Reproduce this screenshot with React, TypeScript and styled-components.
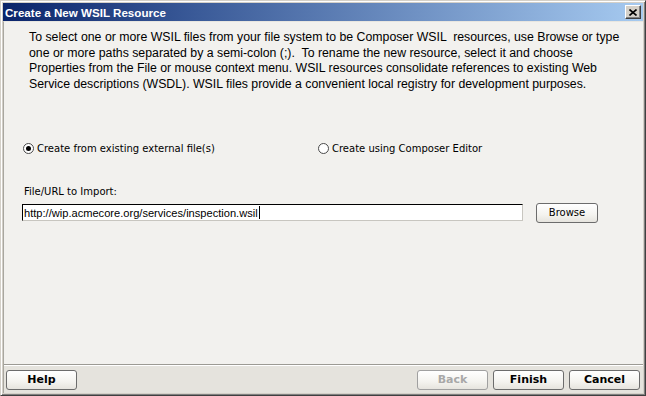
import React from "react";
import styled, { createGlobalStyle } from "styled-components";

const Global = createGlobalStyle`
  html, body { margin: 0; padding: 0; background: #d4d0c8; }
  * { box-sizing: border-box; }
`;

const Window = styled.div`
  width: 646px;
  height: 396px;
  display: flex;
  flex-direction: column;
  background: #d4d0c8;
  border: 1px solid;
  border-color: #d4d0c8 #404040 #404040 #d4d0c8;
  box-shadow: inset 1px 1px #ffffff, inset -1px -1px #808080;
  padding: 2px 2px 2px 2px;
`;

const TitleBar = styled.div`
  height: 18px;
  flex: none;
  display: flex;
  align-items: center;
  justify-content: space-between;
  padding: 0 2px 0 2px;
  background: linear-gradient(to right, #0a246a 0%, #3a5a98 30%, #a6caf0 100%);
`;

const Title = styled.span`
  color: #ffffff;
  font-family: "Liberation Sans", Arial, sans-serif;
  font-weight: bold;
  font-size: 11.6px;
`;

const CloseButton = styled.div`
  width: 16px;
  height: 14px;
  display: flex;
  align-items: center;
  justify-content: center;
  background: #d4d0c8;
  border: 1px solid;
  border-color: #ffffff #404040 #404040 #ffffff;
  box-shadow: inset -1px -1px #808080;
`;

const Body = styled.div`
  flex: 1;
  display: flex;
  flex-direction: column;
  background: #f2f1ee;
  border-top: 1px solid #e8e6e0;
  border-left: 1px solid #a8a69f;
`;

const Content = styled.div`
  flex: 1;
  padding: 8px 0 0 18px;
  display: flex;
  flex-direction: column;
`;

const Intro = styled.p`
  margin: 0 0 0 7px;
  font-family: "Liberation Sans", Arial, sans-serif;
  font-size: 12.3px;
  line-height: 15.7px;
  color: #000000;
`;

const Line = styled.span`
  display: block;
  white-space: pre;
`;

const RadioRow = styled.div`
  margin-top: 50px;
  display: grid;
  grid-template-columns: 295px 295px;
  align-items: center;
`;

const RadioOption = styled.label`
  display: flex;
  align-items: center;
  gap: 3px;
  font-family: "DejaVu Sans", sans-serif;
  font-size: 10px;
  color: #000000;
  padding-left: 1px;
`;

const RadioCircle = styled.span<{ $checked?: boolean }>`
  width: 11px;
  height: 11px;
  border-radius: 50%;
  border: 1px solid #4a4a4a;
  background: #ffffff;
  display: flex;
  align-items: center;
  justify-content: center;
  &::after {
    content: "";
    width: 5px;
    height: 5px;
    border-radius: 50%;
    background: ${(p) => (p.$checked ? "#000000" : "transparent")};
  }
`;

const FieldLabel = styled.div`
  margin-top: 32px;
  margin-left: 2px;
  font-family: "DejaVu Sans", sans-serif;
  font-size: 10px;
  color: #000000;
`;

const FieldRow = styled.div`
  margin-top: 6px;
  display: flex;
  align-items: center;
  gap: 13px;
`;

const TextBox = styled.div`
  width: 501px;
  height: 17px;
  background: #ffffff;
  border: 1px solid;
  border-color: #000000 #c8c6c0 #c8c6c0 #000000;
  display: flex;
  align-items: center;
  padding-left: 1px;
  font-family: "Liberation Sans", Arial, sans-serif;
  font-size: 11.1px;
  color: #000000;
`;

const Caret = styled.span`
  display: inline-block;
  width: 1px;
  height: 13px;
  background: #000000;
  margin-left: 1px;
`;

const Button = styled.button<{ $bold?: boolean; $w?: number }>`
  width: ${(p) => p.$w ?? 71}px;
  height: 20px;
  padding: 0;
  border: 1px solid #6c6c6c;
  border-radius: 3px;
  background: linear-gradient(to bottom, #ffffff 0%, #f4f3ef 60%, #e6e4de 100%);
  font-family: "DejaVu Sans", sans-serif;
  font-size: ${(p) => (p.$bold ? "11px" : "10px")};
  font-weight: ${(p) => (p.$bold ? "bold" : "normal")};
  color: #000000;
  &:disabled {
    color: #a8a8a8;
    border-color: #a0a0a0;
  }
`;

const Footer = styled.div`
  height: 29px;
  flex: none;
  display: flex;
  align-items: center;
  justify-content: space-between;
  padding: 1px 3px 0 2px;
  background: #e5e3dd;
  border-top: 1px solid #9c9a94;
  box-shadow: inset 0 1px #ffffff;
`;

const ButtonGroup = styled.div`
  display: flex;
  gap: 5px;
`;

export default function App() {
  return (
    <>
      <Global />
      <Window>
        <TitleBar>
          <Title>Create a New WSIL Resource</Title>
          <CloseButton>
            <svg width="8" height="7" viewBox="0 0 8 7">
              <path d="M0.5 0.5 L7.5 6.5 M7.5 0.5 L0.5 6.5" stroke="#000" strokeWidth="1.6" />
            </svg>
          </CloseButton>
        </TitleBar>
        <Body>
          <Content>
            <Intro>
              <Line>To select one or more WSIL files from your file system to be Composer WSIL  resources, use Browse or type</Line>
              <Line>one or more paths separated by a semi-colon (;).  To rename the new resource, select it and choose</Line>
              <Line>Properties from the File or mouse context menu. WSIL resources consolidate references to existing Web</Line>
              <Line>Service descriptions (WSDL). WSIL files provide a convenient local registry for development purposes.</Line>
            </Intro>
            <RadioRow>
              <RadioOption>
                <RadioCircle $checked />
                Create from existing external file(s)
              </RadioOption>
              <RadioOption>
                <RadioCircle />
                Create using Composer Editor
              </RadioOption>
            </RadioRow>
            <FieldLabel>File/URL to Import:</FieldLabel>
            <FieldRow>
              <TextBox>
                http://wip.acmecore.org/services/inspection.wsil
                <Caret />
              </TextBox>
              <Button $w={62}>Browse</Button>
            </FieldRow>
          </Content>
          <Footer>
            <Button $bold>Help</Button>
            <ButtonGroup>
              <Button $bold disabled>Back</Button>
              <Button $bold>Finish</Button>
              <Button $bold>Cancel</Button>
            </ButtonGroup>
          </Footer>
        </Body>
      </Window>
    </>
  );
}
